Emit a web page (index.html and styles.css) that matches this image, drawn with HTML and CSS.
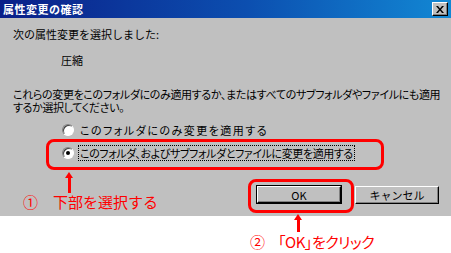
FILE: index.html
```html
<!DOCTYPE html>
<html lang="ja">
<head>
<meta charset="utf-8">
<link rel="stylesheet" href="styles.css">
</head>
<body>
<div class="window">
  <div class="titlebar">
    <span class="title">属性変更の確認</span>
    <span class="close-btn">
      <svg width="8" height="7" viewBox="0 0 8 7"><path d="M0 0h2l2 2.5L6 0h2L5 3.5 8 7H6L4 4.5 2 7H0l3-3.5z" fill="#000"/></svg>
    </span>
  </div>
  <div class="dialog">
    <p class="line">次の属性変更を選択しました:</p>
    <p class="attr">圧縮</p>
    <p class="para">これらの変更をこのフォルダにのみ適用するか、またはすべてのサブフォルダやファイルにも適用<br>するか選択してください。</p>
    <div class="options">
      <div class="option"><span class="radio"></span><span class="label wide">このフォルダにのみ変更を適用する</span></div>
      <div class="option"><span class="radio checked"></span><span class="label focus">このフォルダ、およびサブフォルダとファイルに変更を適用する</span></div>
    </div>
    <div class="buttons">
      <span class="btn default"><span class="btn-inner">OK</span></span>
      <span class="btn"><span class="btn-inner">キャンセル</span></span>
    </div>
  </div>
</div>

<div class="hl hl-option"></div>
<div class="hl hl-ok"></div>
<div class="arrow arrow-1"></div>
<div class="arrow arrow-2"></div>
<div class="note note-1"><span class="num">①</span><span>下部を選択する</span></div>
<div class="note note-2"><span class="num">②</span><span>「OK」をクリック</span></div>
</body>
</html>
```

FILE: styles.css
```css
html, body {
  margin: 0;
  padding: 0;
  background: #ffffff;
}
body {
  width: 451px;
  height: 253px;
  position: relative;
  overflow: hidden;
  font-family: "Noto Sans CJK JP", "Liberation Sans", sans-serif;
  font-size: 11px;
  color: #000;
  font-feature-settings: "palt";
}
.window {
  width: 451px;
}
.titlebar {
  height: 18px;
  background: linear-gradient(to right, #0a1f88 0%, #0c4fb0 55%, #1288d4 100%);
  display: flex;
  align-items: center;
  justify-content: space-between;
  padding: 0 3px 0 3px;
}
.title {
  color: #fff;
  font-weight: bold;
  font-size: 11px;
  line-height: 16px;
  letter-spacing: 0.5px;
  font-feature-settings: normal;
}
.close-btn {
  width: 14px;
  height: 12px;
  background: #c0c0c0;
  border: 1px solid;
  border-color: #fff #000 #000 #fff;
  box-shadow: inset -1px -1px 0 #808080;
  display: flex;
  align-items: center;
  justify-content: center;
}
.dialog {
  background: #c0c0c0;
  height: 198px;
  padding: 0 12px 0 13px;
  box-sizing: border-box;
  display: flex;
  flex-direction: column;
}
.dialog p {
  margin: 0;
  line-height: 13px;
}
.line {
  margin-top: 10px !important;
  font-feature-settings: normal;
}
.attr {
  margin: 13px 0 0 48px !important;
  font-feature-settings: normal;
}
.para {
  margin-top: 21px !important;
  white-space: nowrap;
  letter-spacing: -0.35px;
}
.options {
  margin: 8px 0 0 49px;
  display: flex;
  flex-direction: column;
  gap: 7px;
}
.option {
  display: flex;
  align-items: center;
  height: 16px;
}
.radio {
  width: 12px;
  height: 12px;
  box-sizing: border-box;
  border-radius: 50%;
  background: #fff;
  border: 1px solid;
  border-color: #808080 #fff #fff #808080;
  box-shadow: inset 1px 1px 0 #404040;
  position: relative;
  flex: none;
}
.radio.checked::after {
  content: "";
  position: absolute;
  left: 3px;
  top: 3px;
  width: 4px;
  height: 4px;
  border-radius: 50%;
  background: #000;
}
.label {
  margin-left: 5px;
  line-height: 14px;
  padding: 0 1px;
}
.label.wide {
  letter-spacing: 1.5px;
}
.label.focus {
  outline: 1px dotted #000;
  outline-offset: 0;
  letter-spacing: -0.4px;
}
.buttons {
  margin-top: 25px;
  display: flex;
  justify-content: flex-end;
  gap: 13px;
}
.btn {
  width: 84px;
  height: 18px;
  box-sizing: border-box;
  border: 1px solid;
  border-color: #fff #000 #000 #fff;
  box-shadow: inset -1px -1px 0 #808080;
  display: flex;
  align-items: center;
  justify-content: center;
  font-feature-settings: normal;
}
.btn.default {
  width: 86px;
  height: 19px;
  margin-top: -1px;
  border: 1px solid #000;
  box-shadow: none;
  padding: 0;
}
.btn.default .btn-inner {
  width: 100%;
  height: 100%;
  box-sizing: border-box;
  border: 1px solid;
  border-color: #fff #000 #000 #fff;
  box-shadow: inset -1px -1px 0 #808080;
  display: flex;
  align-items: center;
  justify-content: center;
}
.btn-inner {
  line-height: 14px;
}

/* annotations overlay */
.hl {
  position: absolute;
  border: 3px solid #ff0000;
  border-radius: 8px;
  box-sizing: border-box;
}
.hl-option {
  left: 46px;
  top: 139px;
  width: 338px;
  height: 31px;
}
.hl-ok {
  left: 248px;
  top: 179px;
  width: 106px;
  height: 34px;
}
.arrow {
  position: absolute;
  width: 3px;
  background: #ff0000;
}
.arrow::before {
  content: "";
  position: absolute;
  left: -3px;
  top: -6px;
  border-left: 4.5px solid transparent;
  border-right: 4.5px solid transparent;
  border-bottom: 6px solid #ff0000;
}
.arrow-1 {
  left: 68px;
  top: 178px;
  height: 15px;
}
.arrow-2 {
  left: 297px;
  top: 220px;
  height: 12px;
}
.note {
  position: absolute;
  color: #ff0000;
  font-size: 15px;
  line-height: 18px;
  font-feature-settings: normal;
  white-space: nowrap;
  display: flex;
  gap: 15px;
}
.note-1 {
  left: 23px;
  top: 193px;
}
.note-2 {
  left: 250px;
  top: 233px;
  gap: 13px;
}
.note-2 span:last-child {
  font-feature-settings: "palt";
  letter-spacing: -0.5px;
}
```
